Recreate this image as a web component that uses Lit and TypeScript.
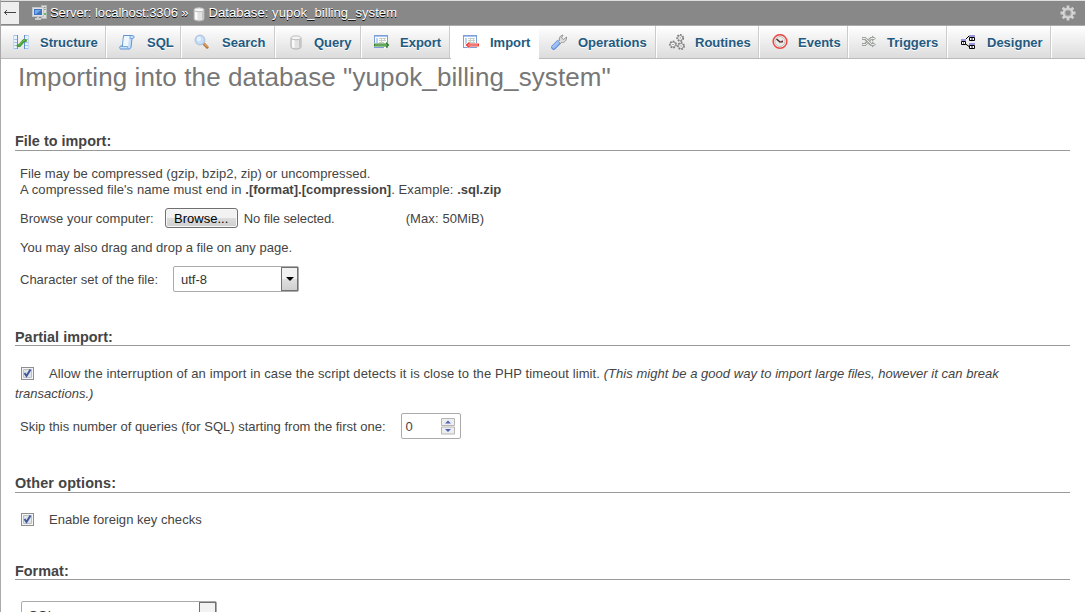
import { LitElement, html, css, svg, type SVGTemplateResult } from "lit";
import { customElement, property } from "lit/decorators.js";

const sheet = svg`
  <rect x=".5" y="1.500" width="13" height="12" fill="#fff" stroke="#7c9fda"/>
  <path d="M1 2.500h12" stroke="#a9c3ee"/>
  <path d="M2 4h2v8H2z" fill="#bcd2f4"/>
  <path d="M5 4.500h7M5 6.500h7M5 8.500h7M7.500 4v5M10.500 4v5" stroke="#c3d0c6"/>`;

const cylinder = svg`
  <path d="M3 4v9c0 1 2 2 5 2s5-1 5-2V4z" fill="#e2e2e2" stroke="#b0b0b0"/>
  <path d="M4 5.500h2.500v8.500c-1.500-.2-2.500-.6-2.500-1.500z" fill="#fafafa"/>
  <path d="M11 5.500h1.500V13l-1.500.7z" fill="#c4c4c4"/>
  <ellipse cx="8" cy="3.800" rx="5" ry="2" fill="#f5f5f5" stroke="#bdbdbd"/>`;

const icons: Record<string, SVGTemplateResult> = {
  structure: svg`
    <path d="M0 1h5v14H0zM11 1h5v14h-5z" fill="#eaf2fd"/>
    <path d="M0 1.500h5M0 5.500h4M0 8.500h4M0 11.500h4M0 14.500h5M11 1.500h5M12 5.500h4M12 8.500h4M12 11.500h4M11 14.500h5" stroke="#a3c2ea" fill="none"/>
    <path d="M.5 1v14M15.500 1v14" stroke="#c3d8f3"/>
    <path d="M4.500 1v14M11.500 1v14" stroke="#5e91d0"/>
    <path d="M5 11.500h1.500l4.500-5h1.500" fill="none" stroke="#459a35" stroke-width="3" stroke-linecap="round"/>
    <path d="M5 11h1.500l4.500-5h1.500" fill="none" stroke="#74bd58"/>`,
  sql: svg`
    <path d="M4.500 1.500h9c2 0 2 3 0 3h-.5l-1 8.500c-.2 1.500-1 2-2 2H2c-2 0-1.500-3 0-3h1.500z" fill="#c9e2fb" stroke="#5a92d2"/>
    <path d="M5 2h5.500L9 12H4z" fill="#eff7ff"/>
    <path d="M2 12.500h6.500c0 1 .3 2 1 2.500M13 4.500h-2c0-1.500 0-2.500 1-3" fill="none" stroke="#79a9e0"/>`,
  search: svg`
    <path d="M9.800 9.800l3.400 3.400" stroke="#b8783f" stroke-width="3" stroke-linecap="round"/>
    <path d="M10 9.500l3.400 3.400" stroke="#f0c083"/>
    <circle cx="6" cy="6" r="4.700" fill="#c6dffb" stroke="#b5c6de" stroke-width="1.500"/>
    <circle cx="5" cy="5" r="2.200" fill="#e4f1ff"/>`,
  query: cylinder,
  database: cylinder,
  export: svg`${sheet}
    <path d="M0 9h10V7l6 4-6 4v-2H0z" fill="#fff"/>
    <path d="M0 11h14" stroke="#2f7d2b" stroke-width="3"/>
    <path d="M12 8l3.500 3-3.500 3z" fill="#2f7d2b"/>
    <path d="M1 11h12" stroke="#9bd28e"/>`,
  import: svg`${sheet}
    <path d="M16 9H7V7l-6 4 6 4v-2h9z" fill="#fff"/>
    <path d="M16 11H5" stroke="#e8403c" stroke-width="3"/>
    <path d="M6.500 7.500L2.500 11l4 3.500z" fill="#e8403c"/>
    <path d="M15 11H5" stroke="#ffb0a8"/>`,
  operations: svg`
    <path d="M2.700 13.300l5-5" stroke="#5d8bd6" stroke-width="5" stroke-linecap="round"/>
    <path d="M2.700 12.900l5-5" stroke="#9cc0f5" stroke-width="3.400" stroke-linecap="round"/>
    <path d="M7.500 7.500l1-1C7.800 4 9 1.500 12 1l-1.500 3 2 1.500L15.500 3c.5 3-2 6-5 5.500l-1.200 1z" fill="#dcdcdc" stroke="#8c8c8c" stroke-width=".9"/>`,
  routines: svg`
    <g fill="none" stroke="#777" stroke-width="1.400" stroke-dasharray="1.700 1.200">
      <circle cx="11.200" cy="4" r="3.200"/><circle cx="4" cy="10.500" r="3.200"/><circle cx="12" cy="12" r="3.200"/>
    </g>
    <g fill="#fff" stroke="#777" stroke-width=".8"><circle cx="11.200" cy="4" r="2.400"/><circle cx="4" cy="10.500" r="2.400"/><circle cx="12" cy="12" r="2.400"/></g>
    <g fill="#555"><path d="M10.700 3.500h1v1h-1zM3.500 10h1v1h-1zM11.500 11.500h1v1h-1z"/></g>`,
  events: svg`
    <circle cx="8" cy="7.500" r="6.800" fill="#fff" stroke="#ea4a45" stroke-width="1.600"/>
    <circle cx="8" cy="7.500" r="5" fill="#e9e9e6" stroke="#b9b9b9" stroke-width=".9"/>
    <path d="M4.500 5L8 8l3-.5" fill="none" stroke="#333" stroke-width="1.500"/>
    <path d="M7 9l4-3" stroke="#d66" stroke-width=".7"/>`,
  triggers: svg`
    <path d="M1 4.500h3l6 6h2M1 10.500h3l2-2M8 6.500l2-2h2" fill="none" stroke="#9ea39c" stroke-width="3"/>
    <path d="M11 1.500l4 3-4 3zM11 7.500l4 3-4 3z" fill="#9ea39c"/>
    <path d="M1.500 4.500h3l6 6h3M1.500 10.500h3l2-2M8 6.500l2-2h3.500" fill="none" stroke="#eee"/>`,
  designer: svg`
    <path d="M5 6l4-4M5 9.500l4 3" fill="none" stroke="#000"/>
    <g fill="#fff" stroke="#000"><path d="M1.500 7.500h4v3h-4zM9.500 3.500h5v3h-5zM9.500 11.500h5v3h-5z"/></g>
    <path d="M1 5h5v2H1zM9 1h6v2H9zM9 9h6v2H9z" fill="#9a97e0"/>
    <path d="M11 5h2M11 13h2M3 9h1" stroke="#000"/>`,
  server: svg`
    <path d="M9.500 .5h5v13h-5z" fill="#d9dcda" stroke="#b4b8b5"/>
    <path d="M10.500 2.500h3M10.500 4.500h3" stroke="#8d918e"/>
    <rect x="12" y="8" width="2" height="2" fill="#62c45e"/>
    <rect x=".5" y="2.500" width="11" height="9" fill="#dfe1e4" stroke="#c2c5c9"/>
    <path d="M2 4h8v6H2z" fill="#3f74c2"/><path d="M3 5h6L4 9H3z" fill="#78a8e8"/>
    <path d="M5 12h2v1h2v2H3v-2h2z" fill="#ccc"/>`,
  gear: svg`
    <g stroke="#d2d2d2" stroke-width="2.800"><path d="M8 .5v15M.5 8h15M2.700 2.700l10.600 10.600M13.300 2.700L2.700 13.300"/></g>
    <circle cx="8" cy="8" r="5.300" fill="#d6d6d6"/>
    <circle cx="8" cy="8" r="3.500" fill="#aaa"/>
    <circle cx="8" cy="8" r="2.300" fill="#8a8a8a"/>`,
};

@customElement("pma-icon")
class PmaIcon extends LitElement {
  @property() name = "";
  static styles = css`
    :host { display: block; flex: none; width: 16px; height: 16px; }
    svg { display: block; }
  `;
  render() {
    return html`<svg width="16" height="16" viewBox="0 0 16 16">${icons[this.name]}</svg>`;
  }
}

@customElement("pma-check")
class PmaCheck extends LitElement {
  static styles = css`
    :host { display: inline-block; width: 13px; height: 13px; vertical-align: -2px; }
    svg { display: block; }
  `;
  render() {
    return html`<svg width="13" height="13" viewBox="0 0 13 13">
      <rect x=".5" y=".5" width="12" height="12" fill="#f4f4f4" stroke="#8e8f8f"/>
      <path d="M2.500 2.500h8v8h-8z" fill="#dfe3e8" stroke="#bcc1c8"/>
      <path d="M3.500 6L5.500 9 9.500 2.500" fill="none" stroke="#41579b" stroke-width="2"/>
    </svg>`;
  }
}

const tabs = ["Structure", "SQL", "Search", "Query", "Export", "Import", "Operations", "Routines", "Events", "Triggers", "Designer"];

@customElement("app-root")
class AppRoot extends LitElement {
  static styles = css`
    :host {
      display: block; box-sizing: border-box; height: 612px; overflow: hidden;
      background: #fff; color: #444; border-left: 1px solid #aaa;
      font: 13px/16px "Liberation Sans", Arial, sans-serif;
    }
    .bar {
      display: flex; align-items: center; box-sizing: border-box; height: 26px;
      background: #888; border-top: 1px solid #ddd; border-bottom: 1px solid #aaa;
      color: #fff; text-shadow: 0 1px 0 #000; padding-right: 9px;
    }
    .back {
      width: 18px; height: 22px; margin: 0 13px 1px 0; background: #eee; display: grid; place-items: center;
    }
    .crumb { white-space: pre; }
    .c1 { letter-spacing: -0.07px; }
    .c2 { letter-spacing: 0.07px; }
    .bar .db { margin: 1px 2px 0 2px; }
    .bar .server { margin-right: 2px; }
    .spacer { flex: 1; }
    .tabs {
      display: grid; height: 33px; box-sizing: border-box;
      grid-template-columns: 106px 75px 94px 86px 89px 88px 118px 103px 89px 99px 104px 1fr;
      background: linear-gradient(#fff, #dcdcdc); border-bottom: 1px solid #bbb;
    }
    .tab {
      display: flex; align-items: center; gap: 10px; padding-left: 12px; box-sizing: border-box;
      border-right: 1px solid #fff; box-shadow: inset -1px 0 #ccc;
      color: #235a81; font-weight: bold; text-shadow: 0 1px 0 #fff; white-space: nowrap;
    }
    .tab span { padding-top: 2px; }
    .tab.structure, .tab.import, .tab.operations, .tab.designer { gap: 11px; }
    .tab.sql, .tab.search { gap: 12px; }
    .tab.active { background: #fff; margin-bottom: -1px; padding-bottom: 1px; box-shadow: none; }
    h2 { margin: 0 0 37px 17px; font: 26px/36px "Liberation Sans", Arial, sans-serif; letter-spacing: 0.1px; color: #777; }
    .legend {
      margin: 0 15px 0 14px; height: 18px; border-bottom: 1px solid #999;
      font-size: 14.400px; line-height: 18px; font-weight: bold; white-space: nowrap; letter-spacing: 0.02px;
    }
    .body { margin-left: 19px; }
    .intro { margin-top: 15px; white-space: nowrap; letter-spacing: 0.05px; }
    .name { letter-spacing: 0.085px; }
    .name b { letter-spacing: 0; }
    .row { display: flex; align-items: center; white-space: nowrap; }
    .browse { margin-top: 10px; height: 20px; }
    .row span { padding-top: 2px; }
    .row span.btn {
      box-sizing: border-box; width: 73px; height: 20px; line-height: 18px; padding-top: 1px; text-align: center; color: #000;
      border: 1px solid #707070; border-radius: 3px; margin: 0 6px 0 11px;
      background: linear-gradient(#f2f2f2 50%, #dcdcdc 50%, #cfcfcf); box-shadow: inset 0 0 0 1px #f8f8f8;
    }
    .nofile { width: 162px; letter-spacing: -0.09px; }
    .max { letter-spacing: 0.1px; }
    .drag { margin-top: 12px; }
    .charset { margin-top: 10px; height: 26px; }
    .select {
      display: flex; justify-content: space-between; align-items: center; box-sizing: border-box;
      width: 126px; height: 26px; border: 1px solid #aaa; border-radius: 2px; padding-left: 7px; margin-left: 15px; color: #333;
    }
    .select span.arrow {
      box-sizing: border-box; width: 17px; height: 24px; padding: 0; border: 1px solid #707070;
      background: linear-gradient(#f2f2f2 50%, #e0e0e0 50%, #d0d0d0); display: grid; place-items: center;
    }
    .partial { margin-top: 35px; line-height: 20px; }
    .allow { margin: 18px 15px 0 14px; line-height: 20px; letter-spacing: 0.108px; }
    .allow i { letter-spacing: 0.03px; }
    .allow pma-check, .fk pma-check { margin: 0 15px 0 6px; }
    .skip { margin-top: 9px; height: 26px; }
    .number {
      display: flex; align-items: center; justify-content: space-between; box-sizing: border-box;
      width: 60px; height: 26px; border: 1px solid #aaa; border-radius: 2px; padding: 0 5px 0 4px; margin-left: 15px;
    }
    .number svg, .arrow svg, .back svg { display: block; }
    .other { margin-top: 35px; letter-spacing: 0.14px; }
    .fk { margin: 19px 0 0 14px; letter-spacing: 0.04px; }
    .format { margin-top: 33px; line-height: 20px; }
    .format-select { width: 196px; margin: 21px 0 0 20px; }
    .format-select .value { padding-top: 3px; }
  `;

  render() {
    return html`
      <div class="bar">
        <div class="back"><svg width="14" height="9" viewBox="0 0 14 9"><path d="M1 4.500h12M4 2L1.500 4.500 4 7" fill="none" stroke="#444"/></svg></div>
        <pma-icon class="server" name="server"></pma-icon>
        <span class="crumb c1">Server: localhost:3306 »</span>
        <pma-icon class="db" name="database"></pma-icon>
        <span class="crumb c2">Database: yupok_billing_system</span>
        <span class="spacer"></span>
        <pma-icon name="gear"></pma-icon>
      </div>
      <nav class="tabs">
        ${tabs.map((t) => html`<a class="tab ${t.toLowerCase()} ${t === "Import" ? "active" : ""}"><pma-icon name=${t.toLowerCase()}></pma-icon><span>${t}</span></a>`)}
      </nav>
      <h2>Importing into the database "yupok_billing_system"</h2>

      <div class="legend">File to import:</div>
      <div class="body">
        <div class="intro">File may be compressed (gzip, bzip2, zip) or uncompressed.<br><span class="name">A compressed file's name must end in <b>.[format].[compression]</b>. Example: <b>.sql.zip</b></span></div>
        <div class="row browse"><span>Browse your computer:</span><span class="btn">Browse...</span><span class="nofile">No file selected.</span><span class="max">(Max: 50MiB)</span></div>
        <div class="drag">You may also drag and drop a file on any page.</div>
        <div class="row charset"><span>Character set of the file:</span>
          <div class="select"><span>utf-8</span><span class="arrow"><svg width="8" height="4"><path d="M0 0h8L4 4z"/></svg></span></div>
        </div>
      </div>

      <div class="legend partial">Partial import:</div>
      <div class="allow"><pma-check></pma-check>Allow the interruption of an import in case the script detects it is close to the PHP timeout limit. <i>(This might be a good way to import large files, however it can break transactions.)</i></div>
      <div class="body row skip"><span>Skip this number of queries (for SQL) starting from the first one:</span>
        <div class="number"><span>0</span><svg width="14" height="17" viewBox="0 0 14 17">
          <path d="M.5 .5h13v7H.5zM.5 9h13v7H.5z" fill="#eee" stroke="#b5b5b5"/>
          <path d="M4 5.500h6L7 2.500zM4 11h6l-3 3z" fill="#4c62b8"/></svg></div>
      </div>

      <div class="legend other">Other options:</div>
      <div class="fk"><pma-check></pma-check><span>Enable foreign key checks</span></div>

      <div class="legend format">Format:</div>
      <div class="select format-select"><span class="value">SQL</span><span class="arrow"><svg width="8" height="4"><path d="M0 0h8L4 4z"/></svg></span></div>
    `;
  }
}
